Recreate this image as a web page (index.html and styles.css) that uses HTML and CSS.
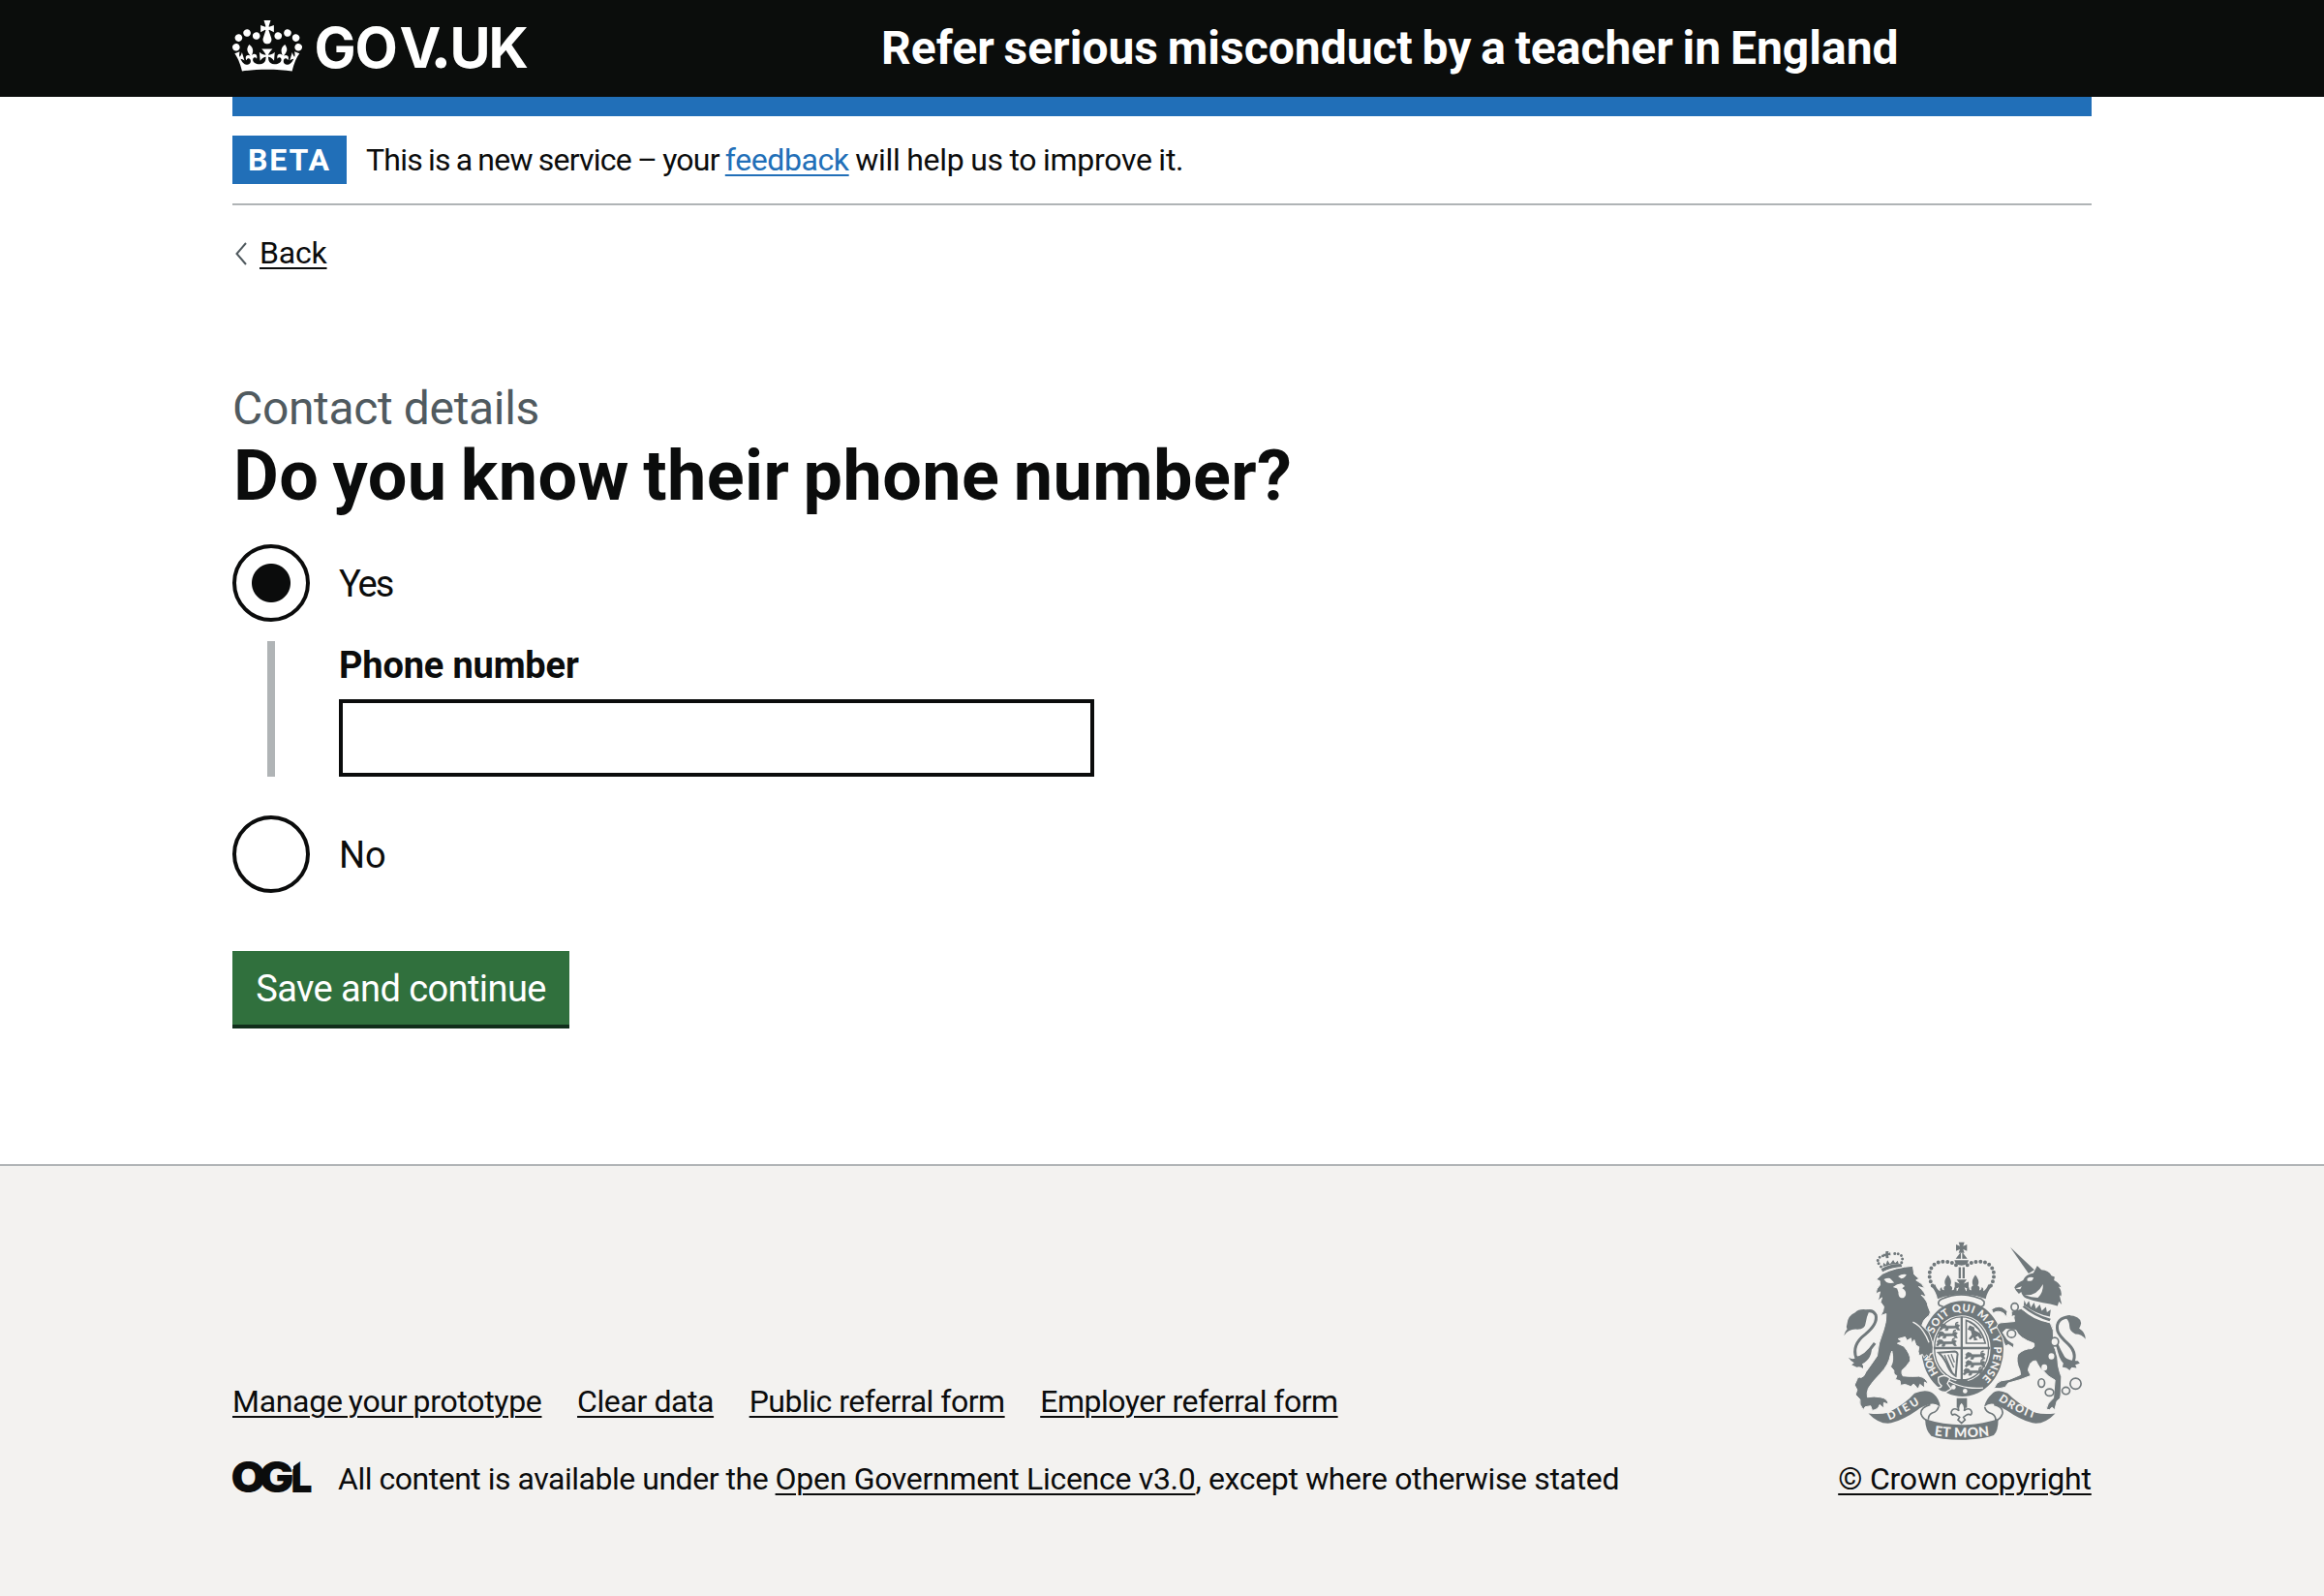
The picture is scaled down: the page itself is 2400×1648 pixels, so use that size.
FILE: index.html
```html
<!DOCTYPE html>
<html lang="en">
<head>
<meta charset="utf-8">
<title>Do you know their phone number? – Refer serious misconduct by a teacher in England</title>
<link rel="stylesheet" href="styles.css">
</head>
<body>
<header class="header">
  <div class="container header-row">
    <a class="header-logo" href="#" aria-label="GOV.UK">
      <svg class="crown" viewBox="0 0 132 97" aria-hidden="true"><path fill="currentColor" fill-rule="evenodd" d="M25 30.2c3.5 1.5 7.7-.2 9.1-3.7 1.5-3.6-.2-7.8-3.9-9.2-3.6-1.4-7.6.3-9.1 3.9-1.4 3.5.3 7.5 3.9 9zM9 39.5c3.6 1.5 7.8-.2 9.2-3.7 1.5-3.6-.2-7.8-3.9-9.1-3.6-1.5-7.6.2-9.1 3.8-1.4 3.5.3 7.5 3.8 9zM4.4 57.2c3.5 1.5 7.7-.2 9.1-3.8 1.5-3.6-.2-7.7-3.9-9.1-3.5-1.5-7.6.3-9.1 3.8-1.4 3.5.3 7.6 3.9 9.1zm38.3-21.4c3.5 1.5 7.7-.2 9.1-3.8 1.5-3.6-.2-7.7-3.9-9.1-3.6-1.5-7.6.3-9.1 3.8-1.3 3.6.4 7.7 3.9 9.1zm64.4-5.6c-3.6 1.5-7.8-.2-9.1-3.7-1.5-3.6.2-7.8 3.8-9.2 3.6-1.4 7.7.3 9.2 3.9 1.3 3.5-.4 7.5-3.9 9zm15.9 9.3c-3.6 1.5-7.7-.2-9.1-3.7-1.5-3.6.2-7.8 3.7-9.1 3.6-1.5 7.7.2 9.2 3.8 1.5 3.5-.3 7.5-3.8 9zm4.7 17.7c-3.6 1.5-7.8-.2-9.2-3.8-1.5-3.6.2-7.7 3.9-9.1 3.6-1.5 7.7.3 9.2 3.8 1.3 3.5-.4 7.6-3.9 9.1zM89.3 35.8c-3.6 1.5-7.8-.2-9.2-3.8-1.4-3.6.2-7.7 3.9-9.1 3.6-1.5 7.7.3 9.2 3.8 1.4 3.6-.3 7.7-3.9 9.1zM69.7 17.7l8.9 4.7V9.3l-8.9 2.8c-.2-.3-.5-.6-.9-.9L72.4 0H59.6l3.5 11.2c-.3.3-.6.5-.9.9l-8.8-2.8v13.1l8.8-4.7c.3.3.6.7.9.9l-5 15.4v.1c-.2.8-.4 1.6-.4 2.4 0 4.1 3.1 7.5 7 8.1h.2c.3 0 .7.1 1 .1.4 0 .7 0 1-.1h.2c4-.6 7.1-4.1 7.1-8.1 0-.8-.1-1.7-.4-2.4V34l-5.1-15.4c.4-.2.7-.6 1-.9zM66 92.8c16.9 0 32.8 1.1 47.1 3.2 4-16.9 8.9-26.7 14-33.5l-9.6-3.4c1 4.9 1.1 7.2 0 10.2-1.5-1.4-3-4.3-4.2-8.7L108.6 76c2.8-2 5-3.2 7.5-3.3-4.4 9.4-10 11.9-13.6 11.2-4.3-.8-6.3-4.6-5.6-7.9 1-4.7 5.7-5.9 8-.5 4.3-8.7-3-11.4-7.6-8.8 7.1-7.2 7.9-13.5 2.1-21.1-8 6.1-8.1 12.3-4.5 20.8-4.7-5.4-12.1-2.5-9.5 6.2 3.4-5.2 7.9-2 7.2 3.1-.6 4.3-6.4 7.8-13.5 7.2-10.3-.9-10.9-8-11.2-13.8 2.5-.5 7.1 1.8 11 7.3L80.2 60c-4.1 4.4-8 5.3-12.3 5.4 1.4-4.4 8-11.6 8-11.6H55.5s6.4 7.2 7.9 11.6c-4.2-.1-8-1-12.3-5.4l1.4 16.4c3.9-5.5 8.5-7.7 10.9-7.3-.3 5.8-.9 12.8-11.1 13.8-7.2.6-12.9-2.9-13.5-7.2-.7-5 3.8-8.3 7.1-3.1 2.7-8.7-4.6-11.6-9.4-6.2 3.7-8.5 3.6-14.7-4.6-20.8-5.8 7.6-5 13.9 2.2 21.1-4.7-2.6-11.9.1-7.7 8.8 2.3-5.5 7.1-4.2 8.1.5.7 3.3-1.3 7.1-5.7 7.9-3.5.7-9-1.8-13.5-11.2 2.5.1 4.7 1.3 7.5 3.3l-4.7-15.4c-1.2 4.4-2.7 7.2-4.3 8.7-1.1-3-.9-5.3 0-10.2l-9.5 3.4c5 6.9 9.9 16.7 14 33.5 14.8-2.1 30.8-3.2 47.7-3.2z"/></svg>
      <svg class="wordmark" viewBox="0 0 224 60"><text class="wordmark-text" y="50" x="0.500 42.500 88.500 123 140.500 180.500">GOV<tspan class="wordmark-dot">.</tspan>UK</text></svg>
    </a>
    <a class="header-title" href="#">Refer serious misconduct by a teacher in England</a>
  </div>
</header>

<div class="container page">
  <div class="phase">
    <strong class="tag">BETA</strong>
    <span class="phase-text"><span class="phase-lead">This is a new service – your </span><a class="link phase-link" href="#">feedback</a><span class="phase-tail"> will help us to improve it.</span></span>
  </div>
  <a class="back" href="#">
    <svg class="back-icon" viewBox="0 0 16 24" aria-hidden="true"><path d="M13 1L3.500 12L13 23" fill="none" stroke="#505a5f" stroke-width="2"/></svg>
    <span class="back-text">Back</span>
  </a>
  <main class="main">
    <span class="caption">Contact details</span>
    <h1 class="title">Do you know their phone number?</h1>
    <div class="radio"><span class="radio-dot is-on"></span><label class="radio-label yes">Yes</label></div>
    <div class="conditional">
      <label class="field-label" for="phone">Phone number</label>
      <input class="field" id="phone" type="tel">
    </div>
    <div class="radio"><span class="radio-dot"></span><label class="radio-label">No</label></div>
    <button class="button" type="button">Save and continue</button>
  </main>
</div>

<footer class="footer">
  <div class="container footer-row">
    <div class="footer-main">
      <nav class="footer-links">
        <a class="footer-link l-manage" href="#">Manage your prototype</a>
        <a class="footer-link l-clear" href="#">Clear data</a>
        <a class="footer-link l-public" href="#">Public referral form</a>
        <a class="footer-link l-employer" href="#">Employer referral form</a>
      </nav>
      <div class="licence">
        <svg class="ogl" viewBox="0 0 82 36"><g class="ogl-text"><text x="-1.500" y="33.500" textLength="36" lengthAdjust="spacingAndGlyphs">O</text><text x="27.500" y="33.500" textLength="36" lengthAdjust="spacingAndGlyphs">G</text><text x="60.500" y="33.500" textLength="22" lengthAdjust="spacingAndGlyphs">L</text></g><path d="M61 0h12L63 7v3h-2z" fill="#f3f2f0"/></svg>
        <span class="licence-text"><span class="t-a">All content is available under the </span><a class="footer-link t-b" href="#">Open Government Licence v3.0</a><span class="t-c">, except where otherwise stated</span></span>
      </div>
    </div>
    <a class="copyright" href="#">
      <svg class="arms" viewBox="72 70 750 616" aria-hidden="true">
        <defs>
          <path id="garter" d="M440 519A98 116 0 0 1 440 287A98 116 0 0 1 440 519"/>
          <path id="scrollLeft" d="M213 624Q262 604 315 568"/>
          <path id="scrollMid" d="M352 672Q440 684 524 672"/>
          <path id="scrollRight" d="M551 562Q604 602 666 620"/>
          <g id="passant"><path d="M0 6l6-6 10 2 4 5h24l8-6 8 4-4 6 4 9-7-1-5-6-22 1-3 7h-8l3-8-9 1-6 6-5-2 4-7z" stroke="#70787b" stroke-width="2"/><path d="M48 5q-2-9 8-9" fill="none" stroke-width="4" stroke="#70787b"/></g>
          <g id="halfcrown">
            <path d="M347 207C327 172 339 134 381 132C403 132 412 138 420 143" fill="none" stroke="#70787b" stroke-width="12" stroke-linecap="round" stroke-dasharray="0 14.300"/>
            <path d="M438 217l-16 7c1-8-3-12-8-11 1 5-1 9-7 8 3-8 0-12-5-14 6-13 1-22-7-33-8 11-14 20-7 33-5 2-8 6-5 14-6 0-8-5-7-9-5 1-7 6-5 12-8-3-13-12-16-21l-11 7c10 11 16 24 19 38q36-14 75-14z"/>
          </g>
        </defs>
        <g fill="#70787b">
          <!-- imperial crown -->
          <path d="M428 72h18l-4 12 12-5v20l-12-5 4 11h-18l4-11-12 5V79l12 5zM432 106h3v17h-16zM439 106h3l13 17h-16z"/>
          <path d="M415 128h44q-3 16-22 16t-22-16zM428 150h7v34h-7zM440 150h7v34h-7zM422 188h31l-9 13 15-6v23l-13-6 5 12h-27l5-12-13 6v-23l15 6z"/>
          <use href="#halfcrown"/><use href="#halfcrown" transform="matrix(-1 0 0 1 875 0)"/>
          <path d="M376 248q60-26 122 0l9 8q2 15-10 16M376 248q-16 8-8 20l12 4" fill="none" stroke="#70787b" stroke-width="5"/>
          <!-- garter and shield -->
          <path fill-rule="evenodd" d="M440 254a127 148 0 0 1 0 297a127 148 0 0 1 0-297zM437 299a90 103 0 0 0 0 206a90 103 0 0 0 0-206z"/>
          <path d="M434 303h7v205h-7zM350 397h176v7H350zM425 497h27l12 14h-50z"/>
          <ellipse cx="437" cy="402" rx="84" ry="98" fill="none" stroke="#70787b" stroke-width="4"/>
          <use href="#passant" x="371" y="325"/><use href="#passant" x="364" y="349"/><use href="#passant" x="361" y="374"/>
          <use href="#passant" x="450" y="414"/><use href="#passant" x="450" y="439"/><use href="#passant" x="444" y="464"/>
          <path d="M449 311q50 14 65 77h-65zM454 319v64h54q-16-50-54-64z" fill-rule="evenodd"/>
          <path d="M462 330l14 6 2 10 16 8 8 16-8 2-6-9-8 4 8 8-12 2-2-10-10 8-5-4 10-12-3-12-10-4z"/>
          <path d="M366 415l50-4q12 3 8 14l-5 62q-15-8-24-28-8-24-29-44z" fill="none" stroke="#70787b" stroke-width="6"/>
          <path d="M384 422l24 54M395 421l18 40M405 419l10 26M376 424l26 44" fill="none" stroke="#70787b" stroke-width="4"/>
          <g class="motto ring">
            <text><textPath href="#garter" startOffset="88" textLength="70">HON</textPath></text>
            <text><textPath href="#garter" startOffset="216" textLength="390">SOIT QUI MAL Y PENSE</textPath></text>
          </g>
          <path d="M365 492q22-13 36 3l-8 16 12 16-16 10q-20 2-28-14 12 2 14-6-12-8-10-25z" stroke="#f3f2f0" stroke-width="4"/>
          <path d="M396 502q50 28 108 22" fill="none" stroke="#f3f2f0" stroke-width="4"/>
          <circle cx="412" cy="522" r="7" fill="#f3f2f0"/><circle cx="448" cy="534" r="7" fill="#f3f2f0"/>
          <!-- lion -->
          <path stroke="#f3f2f0" stroke-width="3" d="M172 188L192 170Q230 150 286 146L290 172L305 185L296 190Q318 200 322 215L304 210Q325 228 326 242L312 236Q332 255 332 268L340 289Q340 300 328 306Q318 314 314 330L335 350Q352 385 348 412Q350 420 340 418L337 430L329 422L320 430L316 420L306 424Q300 412 305 397L296 392L290 375L283 386L280 370L268 377L262 366L240 372L252 380L238 386L258 395Q280 420 278 440Q265 460 252 470Q250 480 255 487Q280 490 305 488Q328 492 333 512L322 506L322 524L308 513Q305 525 300 526Q292 514 288 512L280 520L262 513L248 516L246 502L232 498L236 486Q226 485 227 470L217 458Q228 440 221 410L217 420Q212 452 185 480Q160 505 148 525Q142 540 145 553Q165 549 185 553Q208 556 210 575L196 570L195 587L183 576Q178 592 160 594L155 580L138 583L132 592Q118 575 122 560L108 545L113 530L105 515L112 500Q115 488 125 492Q135 490 140 475Q158 450 175 425Q178 385 195 345Q205 315 203 294L186 300Q196 285 196 272L186 258L190 244L178 254L184 226L171 232Q172 215 184 205L183 192Z"/>
          <path d="M196 187q9-4 19-3 6 5 13 14-14 3-24-2zM240 178q12-9 26-6-3 10-16 13zM224 211q13-10 27-11l10 8-8 7q13 6 11 20-4 12-14 10-10-3-9-18l-4-11z" fill="#f3f2f0"/>
          <path d="M286 320q20 10 32 28 10 14 18 35" fill="none" stroke="#f3f2f0" stroke-width="4"/>
          <path d="M191 166l-5-12q30-18 65-16l3 12q-35 1-63 16z" stroke="#f3f2f0" stroke-width="3"/>
          <path d="M187 148q-14-15-8-25 10-12 24-7M251 135q6-16-2-22-12-10-28-2" fill="none" stroke="#70787b" stroke-width="9" stroke-linecap="round" stroke-dasharray="0 11"/>
          <path d="M202 100h9l-2 6 7-2 1 9-7-1 1 9-8 1-2-8-6 3-1-9 7 0zM193 148l2-13 7 7 5-14 8 12 10-13 6 10 8-8 3 10q-24 0-49 9z"/>
          <path d="M139 288q22-9 32 10 7 27-33 60-42 32-28 73 28-2 58-46" fill="none" stroke="#70787b" stroke-width="9"/>
          <path d="M148 282Q120 276 107 290Q84 300 82 325Q78 335 82 342Q74 350 72 362Q85 342 108 342Q138 345 140 320Q143 302 148 292ZM158 392Q162 432 128 450Q134 455 131 464Q122 455 112 460L96 452L104 446Q92 440 86 430Q100 438 112 430Q135 425 158 392Z"/>
          <!-- unicorn -->
          <path d="M588 87L663 158L645 169Q617 129 588 87Z"/>
          <path d="M601 213Q606 200 628 190Q636 172 660 168L672 145L685 158Q708 160 716 176L726 180L724 190Q738 196 746 212L738 210Q750 225 746 240L741 236L748 265L739 256L735 270Q712 262 690 260Q660 255 637 246Q626 240 622 226L615 232L606 222Z"/>
          <path d="M641 184q12-6 20-1l-5 8q-8 3-15 1zM604 216l20-7-5 9zM633 236q36 4 57-34 1 26-16 42-20 0-41-8z" fill="#f3f2f0"/>
          <path stroke="#f3f2f0" stroke-width="3" d="M622 278Q655 305 712 322Q726 345 722 370Q716 385 728 405Q737 430 737 455Q742 478 747 490L745 545Q747 558 733 565L726 592L718 584L710 592L700 590Q702 572 722 556L727 500Q705 490 690 470Q680 465 668 440Q652 440 648 455Q644 462 644 470L652 486Q620 500 582 509L572 522Q555 528 538 525Q546 505 560 502L585 498Q610 488 620 483L618 470Q604 440 612 420Q630 402 656 402Q666 396 662 386Q615 370 606 345L575 342L565 352L580 375L600 388L598 400L583 390L573 394Q566 380 565 370L546 335Q546 325 558 322L602 318Q598 305 601 300L585 305Q572 302 567 292Q550 282 535 292L530 280Q555 264 572 280L582 290Q600 285 622 278Z"/>
          <path d="M628 248l101 44-17 31q-57-10-87-45z" fill="#f3f2f0"/>
          <path d="M626 273q37 31 84 44l4-7q-49-14-82-42z"/>
          <path d="M630 267l2-15 6 14 8-12 6 20 10-15 6 20 12-14 6 20 13-12 3 16 12-8-3 22q-44-8-81-36z"/>
          <path d="M775 303q-48 3-40 44 4 15 34 42 33 33 6 69-22-20-44-72" fill="none" stroke="#70787b" stroke-width="9"/>
          <path d="M768 299Q806 300 808 323Q806 334 802 340Q822 352 822 373Q810 357 790 357Q772 348 772 333Q772 318 760 306ZM731 392Q750 442 798 440L804 448L790 452L794 462L777 460L773 470Q761 458 750 460L753 448Q738 432 731 392Z"/>
          <g fill="#f3f2f0"><ellipse cx="585" cy="295" rx="9" ry="11"/><ellipse cx="716" cy="426" rx="9" ry="10"/><ellipse cx="694" cy="461" rx="9" ry="10"/></g>
          <g fill="#f3f2f0" stroke="#70787b" stroke-width="5"><ellipse cx="602" cy="273" rx="11" ry="12"/><ellipse cx="592" cy="356" rx="13" ry="12"/><ellipse cx="726" cy="381" rx="12" ry="13"/><ellipse cx="685" cy="509" rx="10" ry="13"/><ellipse cx="710" cy="538" rx="13" ry="11"/><ellipse cx="761" cy="533" rx="12" ry="11"/><circle cx="791" cy="511" r="17"/></g>
          <!-- motto scroll -->
          <path d="M148 603Q184 608 209 601Q264 573 291 541Q329 525 351 543Q368 557 371 583Q355 570 341 574Q315 580 298 594Q258 622 219 633Q182 639 148 603Z"/>
          <path d="M728 603Q692 608 667 601Q616 577 580 541Q547 525 531 543Q514 557 507 583Q523 570 537 574Q557 582 578 594Q618 622 657 633Q694 639 728 603Z"/>
          <path d="M340 576q-30 8-29 28 6 19 24 22M366 582q-4 16-20 20-12 6-12 20M538 576q30 8 26 28-6 19-24 22M509 584q4 16 22 20 12 6 12 20" fill="none" stroke="#70787b" stroke-width="5"/>
          <path d="M324 621q56 18 113 18t114-18q0 38-14 50-34 14-100 14-67 0-94-12-18-16-19-52z"/>
          <g class="motto"><text><textPath href="#scrollLeft" textLength="108">DIEU</textPath></text><text class="motto-mid"><textPath href="#scrollMid" textLength="172">ET MON</textPath></text><text><textPath href="#scrollRight" textLength="126">DROIT</textPath></text></g>
          <path d="M422 556h32v30h-32z"/>
          <path d="M437 567q-14 14-8 28-11-10-20-3-8 9 0 16 6-4 14 1l8 6-5 8 11 11 11-11-5-8 8-6q8-5 14-1 8-7 0-16-9-7-20 3 6-14-8-28z" fill="#f3f2f0" stroke="#70787b" stroke-width="5"/>
        </g>
      </svg>
      <span class="copyright-text">© Crown copyright</span>
    </a>
  </div>
</footer>
</body>
</html>
```
FILE: styles.css
```css
* { box-sizing: border-box; }
body {
  margin: 0;
  background: #fff;
  color: #0b0c0c;
  font-family: Roboto, "Liberation Sans", sans-serif;
  font-size: 32px;
  line-height: 40px;
}
a { color: inherit; }
.container { width: 1920px; margin: 0 auto; }

.header { height: 100px; background: #0b0d0c; color: #fff; }
.header-row { display: grid; grid-template-columns: 670px 1fr; }
.header-logo { display: flex; gap: 12px; padding-top: 20px; text-decoration: none; }
.crown { width: 72px; height: 53px; margin-top: 1px; }
.wordmark { width: 224px; height: 60px; overflow: visible; }
.wordmark-text { font: 700 57.500px Inter, sans-serif; fill: currentColor; }
.wordmark-dot { font: 900 70px Lato, sans-serif; }
.header-title {
  padding-top: 20px;
  font-size: 48px;
  font-weight: 700;
  line-height: 60px;
  word-spacing: -2.2px;
  text-decoration: none;
  white-space: nowrap;
}

.page { height: 1102px; border-top: 20px solid #216fb8; }
.phase {
  display: flex;
  gap: 20px;
  height: 92px;
  padding-top: 20px;
  border-bottom: 2px solid #b0b4b6;
}
.tag {
  width: 118px;
  height: 50px;
  padding-left: 16px;
  background: #216fb8;
  color: #fff;
  line-height: 50px;
  letter-spacing: 1.9px;
}
.phase-text { padding-top: 5px; white-space: pre; }
.phase-lead { letter-spacing: -.76px; word-spacing: -1.2px; }
.phase-link { letter-spacing: -.4px; color: #216fb8; }
.phase-tail { letter-spacing: -.25px; word-spacing: -1.1px; }
.link, .back-text, .footer-link, .copyright-text {
  text-decoration: underline;
  text-decoration-thickness: 2px;
  text-underline-offset: 4px;
}
.back {
  display: flex;
  gap: 11px;
  width: max-content;
  margin-top: 29px;
  text-decoration: none;
}
.back-icon { width: 16px; height: 24px; margin: 9px 0 0 1px; }
.back-text { letter-spacing: -.2px; }

.main { display: flex; flex-direction: column; align-items: flex-start; padding-top: 111px; }
.caption { color: #505a5f; font-size: 48px; line-height: 60px; letter-spacing: -.35px; }
.title {
  height: 110px;
  margin: 0;
  padding: 2px 0 0 1px;
  font-size: 72px;
  line-height: 76px;
  letter-spacing: .42px;
  word-spacing: -4px;
}
.radio { display: flex; gap: 30px; height: 80px; }
.radio-dot { width: 80px; height: 80px; border: 4px solid #0b0c0c; border-radius: 50%; }
.radio-dot.is-on { background: radial-gradient(circle, #0b0c0c 19.5px, transparent 20.500px); }
.radio-label { padding-top: 16px; font-size: 38px; line-height: 50px; }
.radio-label.yes { letter-spacing: -2px; }
.conditional {
  display: flex;
  flex-direction: column;
  gap: 10px;
  height: 140px;
  margin: 20px 0 40px 36px;
  padding-left: 66px;
  border-left: 8px solid #b0b4b6;
}
.field-label { font-size: 38px; font-weight: 700; line-height: 50px; letter-spacing: -.18px; }
.field { width: 780px; height: 80px; border: 4px solid #0b0c0c; border-radius: 0; background: #fff; }
.button {
  width: 348px;
  height: 80px;
  margin-top: 60px;
  padding: 0 0 2px;
  border: 0;
  background: #30703d;
  box-shadow: inset 0 -4px #112e1b;
  color: #fff;
  font: 38px/50px Roboto, sans-serif;
  letter-spacing: -.58px;
}

.footer { height: 446px; border-top: 2px solid #b0b4b6; background: #f3f2f0; }
.footer-row { display: flex; justify-content: space-between; padding-top: 79px; }
.footer-main { padding-top: 144px; }
.footer-links { display: flex; gap: 36.600px; }
.l-manage { letter-spacing: -.3px; word-spacing: -1.4px; }
.l-clear { letter-spacing: -.41px; }
.l-public { letter-spacing: -.49px; }
.l-employer { letter-spacing: -.5px; }
.licence { display: flex; gap: 27px; margin-top: 40px; }
.ogl { width: 82px; height: 36px; overflow: visible; }
.ogl-text { font: 900 44px Inter, sans-serif; fill: #0b0c0c; }
.licence-text { white-space: pre; }
.t-a { letter-spacing: -.48px; }
.t-b { letter-spacing: -.3px; }
.t-c { letter-spacing: -.35px; }
.copyright { display: flex; flex-direction: column; align-items: center; width: 262px; text-decoration: none; }
.arms { width: 250px; height: 205px; margin-top: -1px; }
.copyright-text { margin-top: 20px; letter-spacing: -.2px; white-space: nowrap; }
.motto { font: 900 34px Lato, sans-serif; fill: #f3f2f0; }
.motto .motto-mid { font-size: 42px; }
.motto.ring { font-size: 33px; }
```
